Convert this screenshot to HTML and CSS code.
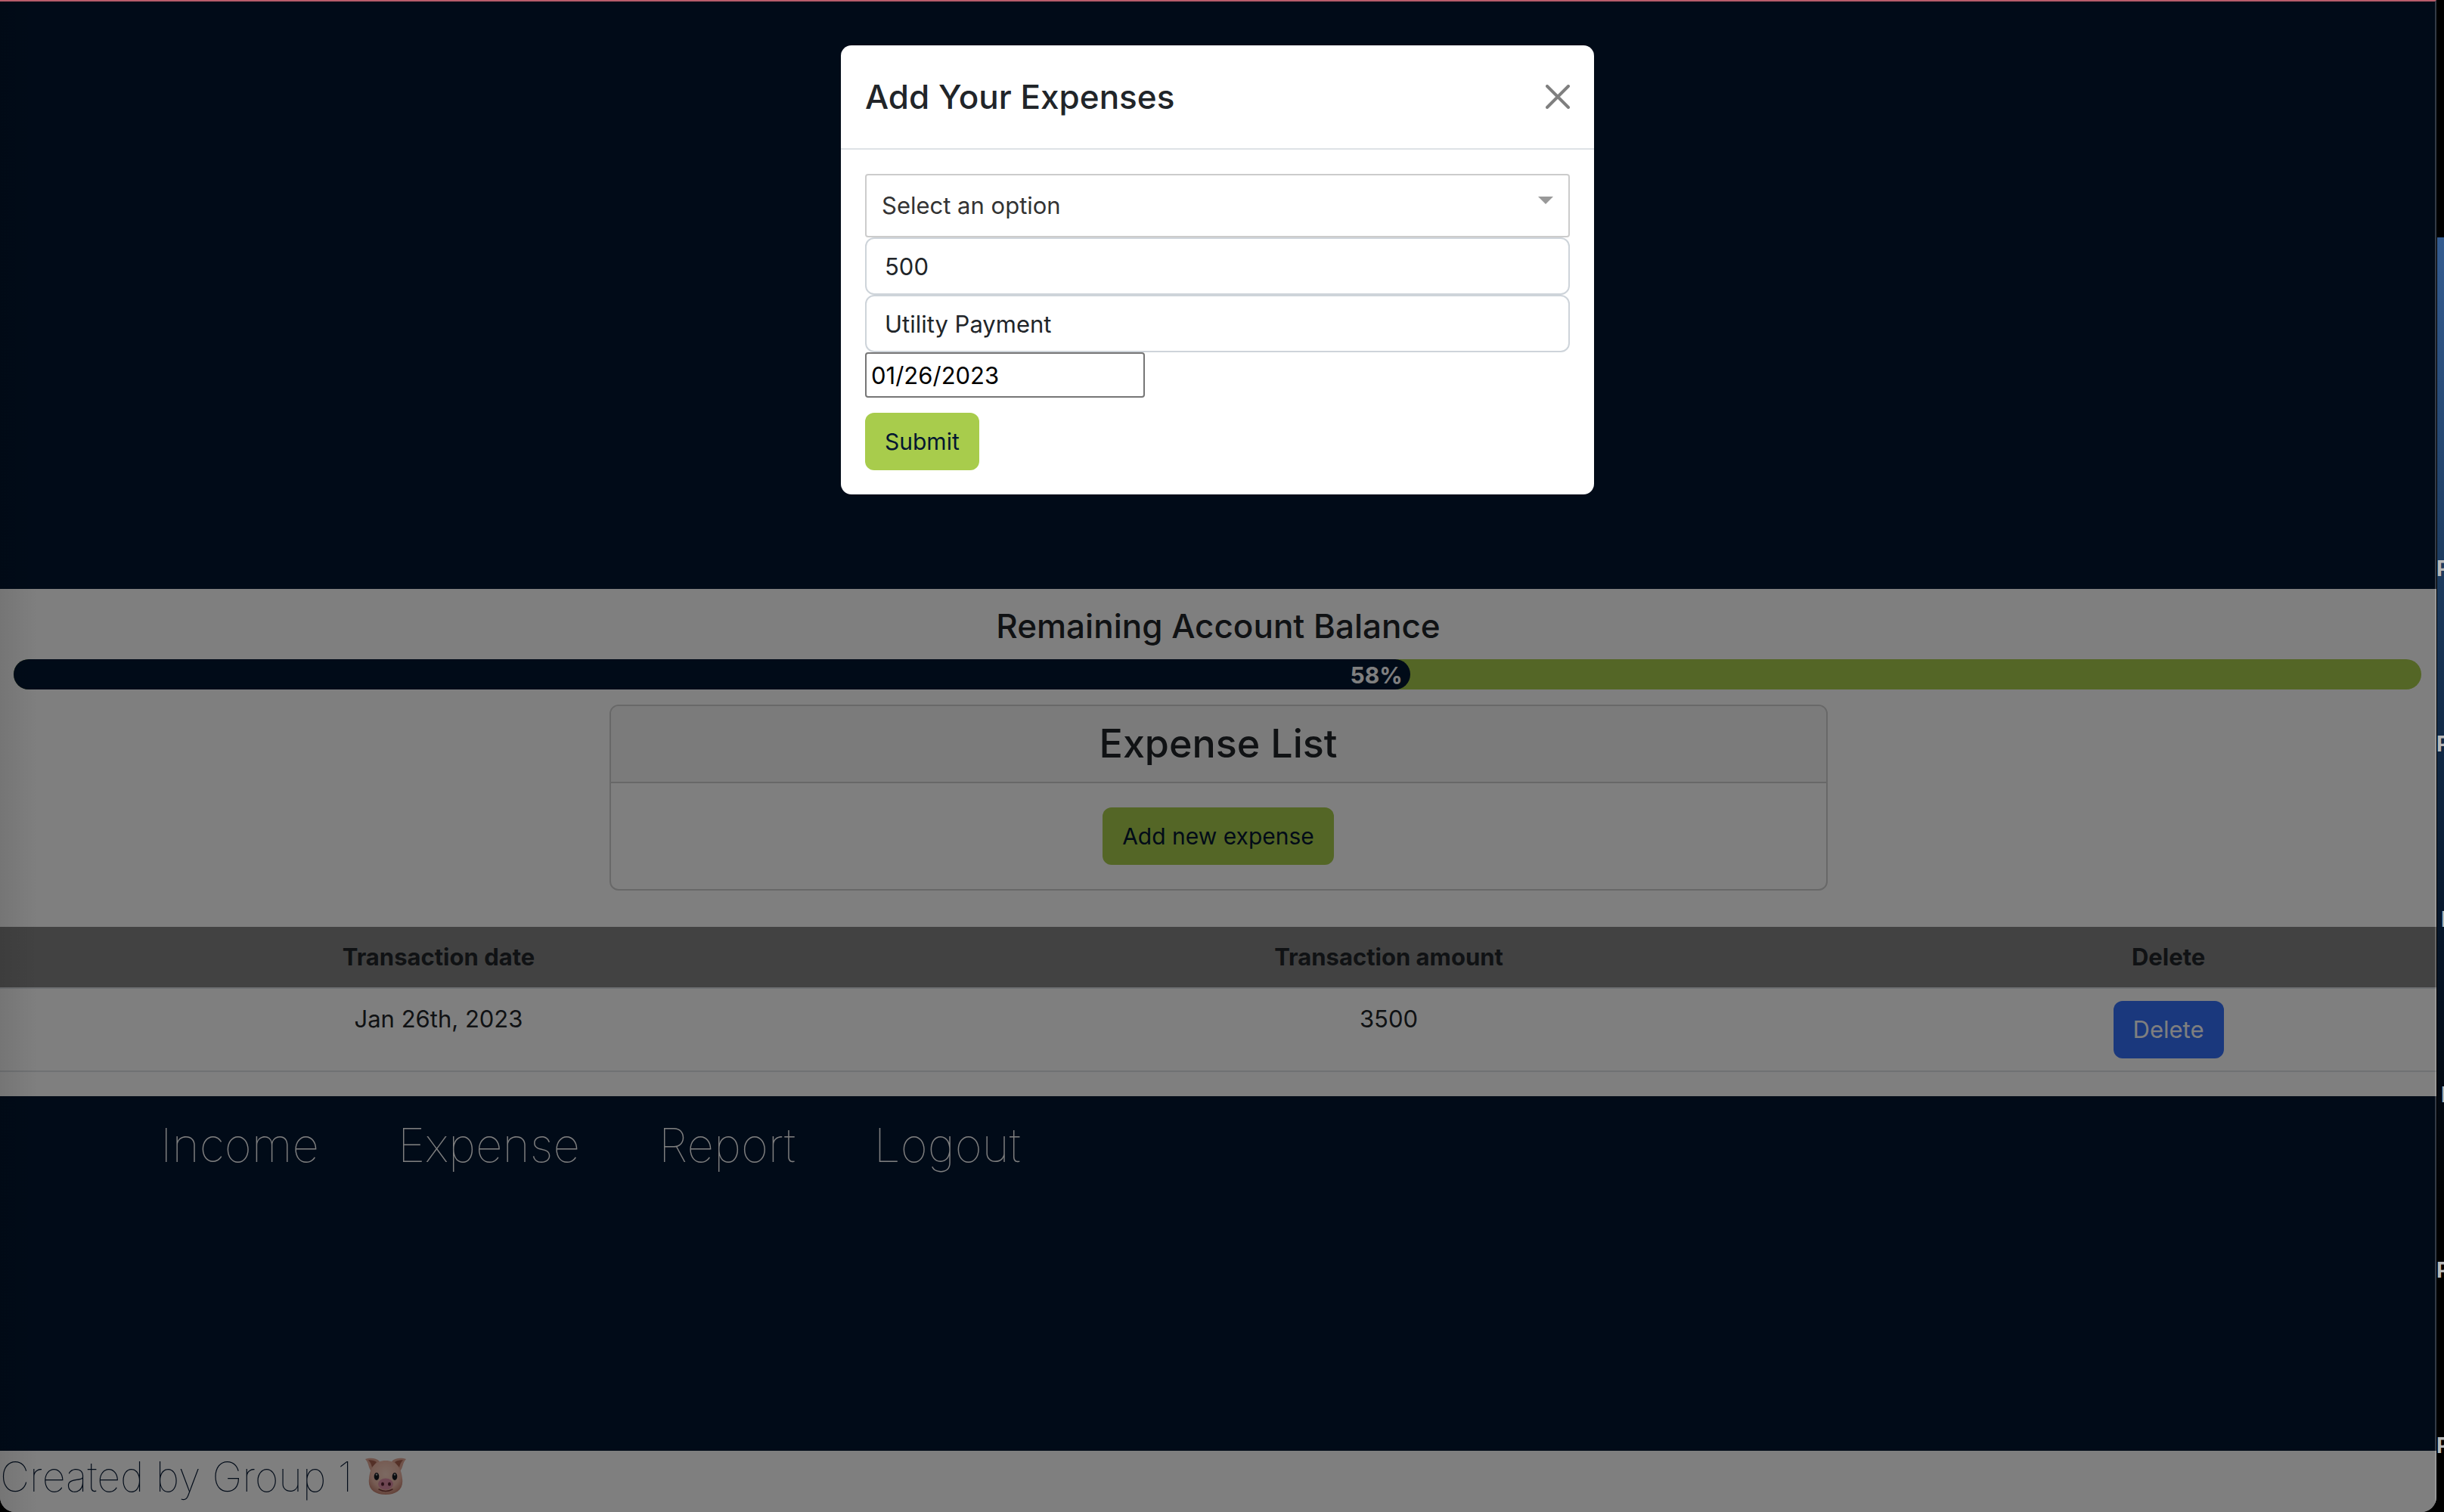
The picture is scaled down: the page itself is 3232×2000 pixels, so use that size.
FILE: index.html
```
<!DOCTYPE html>
<html lang="en">
<head>
<meta charset="utf-8">
<title>Expenses</title>
<link rel="stylesheet" href="styles.css">
</head>
<body>
<div class="window">
  <div class="page">
    <div class="hero"></div>
    <main class="main">
      <h2 class="balance-title">Remaining Account Balance</h2>
      <div class="progress"><div class="progress-fill" style="width: 58%">58%</div></div>
      <section class="card">
        <h1 class="card-header">Expense List</h1>
        <div class="card-body"><button class="btn btn-green" type="button">Add new expense</button></div>
      </section>
      <table class="table">
        <colgroup><col class="col-date"><col class="col-amount"><col></colgroup>
        <thead><tr><th>Transaction date</th><th>Transaction amount</th><th>Delete</th></tr></thead>
        <tbody><tr><td>Jan 26th, 2023</td><td>3500</td><td><button class="btn btn-blue" type="button">Delete</button></td></tr></tbody>
      </table>
    </main>
    <nav class="nav">
      <a href="#income">Income</a>
      <a href="#expense">Expense</a>
      <a href="#report">Report</a>
      <a href="#logout">Logout</a>
    </nav>
    <footer class="footer">
      <span>Created by Group 1</span>
      <svg class="pig" viewBox="0 0 56 52" role="img" aria-label="Pig face">
        <defs><radialGradient id="skin" cx=".5" cy=".4" r=".6"><stop offset="0" stop-color="#f8d3c4"/><stop offset=".7" stop-color="#edb8a7"/><stop offset="1" stop-color="#c98776"/></radialGradient></defs>
        <path d="M1 3C7 1 15 1 20 6L9 19C5 15 6 8 1 3Z" fill="#e0a695"/>
        <path d="M55 3C49 1 41 1 36 6L47 19C51 15 50 8 55 3Z" fill="#e0a695"/>
        <path d="M5 4.500C9 4 13 5 16 7L10 14C9 10 8 7 5 4.500Z" fill="#a8604f"/>
        <path d="M51 4.500C47 4 43 5 40 7L46 14C47 10 48 7 51 4.500Z" fill="#a8604f"/>
        <path d="M28 5C42 5 49 15 50 29C52 43 42 50 28 50C14 50 4 43 6 29C7 15 14 5 28 5Z" fill="url(#skin)"/>
        <ellipse cx="16" cy="26" rx="3.300" ry="5" fill="#171a20"/>
        <ellipse cx="40" cy="26" rx="3.300" ry="5" fill="#171a20"/>
        <circle cx="16" cy="23.500" r="1.200" fill="#aaa"/><circle cx="40" cy="23.500" r="1.200" fill="#aaa"/>
        <path d="M19 43Q28 48 37 43" fill="none" stroke="#7c3e3a" stroke-width="1.500" stroke-linecap="round"/>
        <ellipse cx="28" cy="36" rx="10" ry="7.500" fill="#dc8ca5"/>
        <ellipse cx="24" cy="36" rx="2" ry="2.600" fill="#55202e"/><ellipse cx="33" cy="36" rx="2" ry="2.600" fill="#55202e"/>
      </svg>
    </footer>
  </div>
  <div class="backdrop">
    <form class="modal" role="dialog" aria-labelledby="modal-title">
      <header class="modal-header">
        <h2 class="modal-title" id="modal-title">Add Your Expenses</h2>
        <button class="close" type="button" aria-label="Close"><svg viewBox="0 0 32 32"><path d="M2 2L30 30M30 2L2 30"/></svg></button>
      </header>
      <div class="modal-body">
        <div class="select-wrap">
          <select class="select" aria-label="Category"><option>Select an option</option></select>
          <svg class="arrow" viewBox="0 0 20 10"><path d="M0 0H20L10 10Z"/></svg>
        </div>
        <input class="field" type="text" value="500" aria-label="Amount">
        <input class="field" type="text" value="Utility Payment" aria-label="Description">
        <input class="date" type="text" value="01/26/2023" aria-label="Date">
        <button class="btn btn-green submit" type="button">Submit</button>
      </div>
    </form>
  </div>
</div>
<aside class="desktop">
  <div class="wallpaper"></div>
  <span class="file-name" style="top: 735px">P</span>
  <span class="file-name" style="top: 967px">P</span>
  <span class="file-name inset" style="top: 1199px">P</span>
  <span class="file-name inset" style="top: 1431px">P</span>
  <span class="file-name" style="top: 1663px">P</span>
  <span class="file-name" style="top: 1895px">P</span>
</aside>
</body>
</html>
```
FILE: styles.css
```
* { box-sizing: border-box; }

body {
  margin: 0;
  min-height: 100vh;
  display: flex;
  background: #000;
  color: #212529;
  font-family: Inter, "Liberation Sans", sans-serif;
  font-size: 31px;
  line-height: 48px;
}

h1, h2 { margin: 0; font-weight: 500; }
button, input, select { font: inherit; }

/* Browser window */
.window {
  position: relative;
  flex: 1;
  display: flex;
  overflow: hidden;
  border-radius: 0 0 20px 20px;
}
.window::after {
  content: "";
  position: absolute;
  inset: 0;
  border-top: 2px solid #b85c6a;
  border-right: 2px solid rgba(255, 255, 255, .2);
  pointer-events: none;
}
.page {
  flex: 1;
  display: flex;
  flex-direction: column;
  background: #fff;
}
.hero { min-height: 779px; background: #031631; }
.main { text-align: center; padding: 20px 0 32px; }

.balance-title { font-size: 44px; line-height: 58px; padding-bottom: 15px; }

.progress {
  height: 40px;
  margin: 0 20px 0 18px;
  border-radius: 20px;
  background: #a8cc4c;
}
.progress-fill {
  height: 40px;
  padding-right: 10px;
  border-radius: 20px;
  background: #031631;
  color: #fff;
  font-size: 30px;
  font-weight: 700;
  line-height: 42px;
  text-align: right;
}

.card {
  width: 50%;
  margin: 20px auto 48px;
  border: 2px solid #d0d0d0;
  border-radius: 12px;
}
.card-header {
  padding: 16px;
  border-bottom: 2px solid #d0d0d0;
  border-radius: 10px 10px 0 0;
  background: #f7f7f7;
  font-size: 52px;
  line-height: 68px;
}
.card-body { padding: 32px; }

.btn {
  display: inline-block;
  vertical-align: top;
  padding: 14px 26px;
  border: 0;
  border-radius: 12px;
}
.btn-green { background: #a8cc4c; color: #031631; font-size: 30px; }
.btn-blue { background: #3470fa; color: #fff; }

.table { width: 100%; border-collapse: collapse; table-layout: fixed; }
.col-date { width: 36%; }
.col-amount { width: 42%; }
.table th, .table td {
  padding: 16px;
  border-bottom: 2px solid #dee2e6;
  vertical-align: top;
}
.table th { background: #848484; font-weight: 700; }

.nav {
  flex: 1;
  display: flex;
  align-items: flex-start;
  gap: 104px;
  padding: 22px 212px;
  background: #031631;
  font-size: 62px;
  font-weight: 100;
  line-height: 86px;
}
.nav a { color: #fff; text-decoration: none; }
.footer {
  display: flex;
  align-items: flex-start;
  gap: 16px;
  height: 81px;
  color: #031631;
  font-size: 54px;
  font-weight: 100;
  line-height: 70px;
}
.pig { width: 56px; height: 52px; margin-top: 8px; }

/* Dialog */
.backdrop {
  position: absolute;
  inset: 0;
  padding: 60px 2px 0 0;
  background: linear-gradient(90deg, rgba(0, 0, 0, .08), transparent 50px), rgba(0, 0, 0, .5);
}
.modal {
  width: 996px;
  margin: 0 auto;
  border-radius: 14px;
  background: #fff;
}
.modal-header {
  display: flex;
  align-items: center;
  justify-content: space-between;
  padding: 32px;
  border-bottom: 2px solid #dee2e6;
}
.modal-title { font-size: 44px; line-height: 72px; }
.close { padding: 0; border: 0; background: none; line-height: 0; }
.close svg { width: 32px; height: 32px; fill: none; stroke: #7f7f7f; stroke-width: 4; stroke-linecap: round; }
.modal-body {
  display: flex;
  flex-direction: column;
  align-items: flex-start;
  padding: 32px;
}
.select-wrap { position: relative; width: 100%; }
.select {
  display: block;
  width: 100%;
  height: 84px;
  padding: 0 20px;
  border: 2px solid #ccc;
  border-radius: 4px;
  appearance: none;
  background: #fff;
  color: #333;
}
.arrow { position: absolute; top: 30px; right: 22px; width: 20px; height: 10px; fill: #999; }
.field {
  width: 100%;
  height: 76px;
  padding: 0 24px;
  border: 2px solid #ced4da;
  border-radius: 12px;
  background: #fff;
  color: #212529;
}
.date {
  width: 370px;
  height: 60px;
  padding: 0 6px;
  border: 2px solid #767676;
  border-radius: 4px;
  color: #000;
}
.submit { margin-top: 20px; }

/* Desktop behind the window */
.desktop { position: relative; width: 10px; overflow: hidden; }
.wallpaper {
  position: absolute;
  top: 314px;
  left: 1px;
  right: 0;
  height: 1300px;
  background: linear-gradient(#345c90, #1d3c60 33%, #102844 53%, #061528 72%, #000);
}
.file-name {
  position: absolute;
  left: 0;
  color: #b8b8b8;
  font-size: 28px;
  font-weight: 700;
  line-height: 34px;
}
.inset { left: 6px; }
```
